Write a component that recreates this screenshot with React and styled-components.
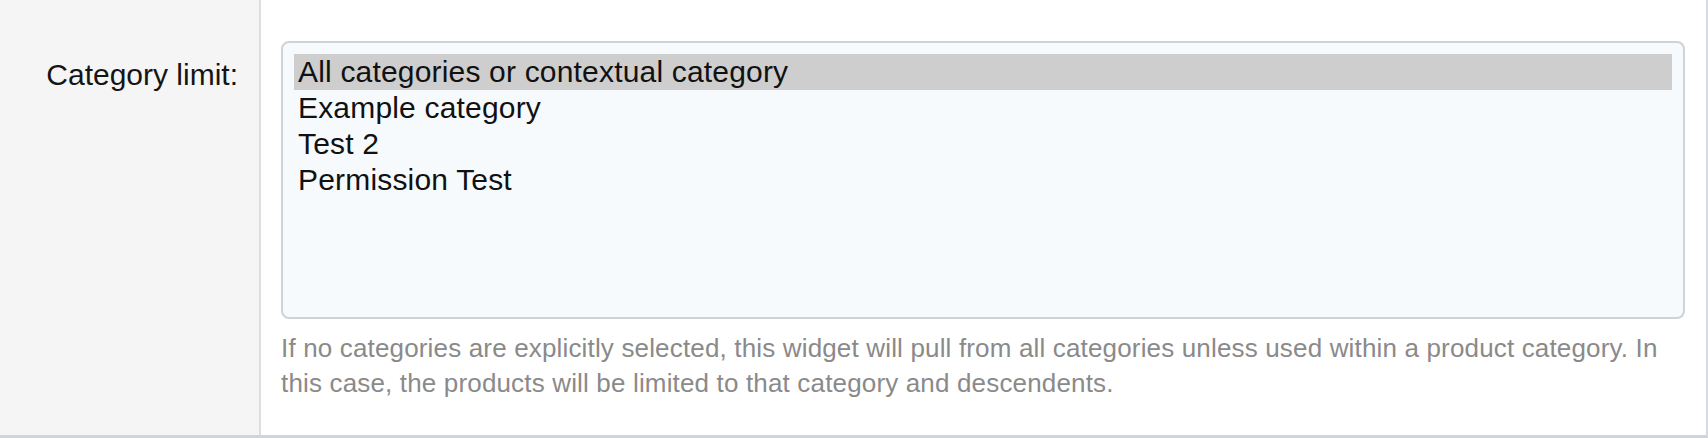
import React from "react";
import styled, { createGlobalStyle } from "styled-components";

const GlobalStyle = createGlobalStyle`
  html, body {
    margin: 0;
    padding: 0;
    background: #ffffff;
  }
  body {
    font-family: "Liberation Sans", Arial, Helvetica, sans-serif;
  }
`;

const options = [
  "All categories or contextual category",
  "Example category",
  "Test 2",
  "Permission Test",
];

const App = () => {
  return (
    <>
      <GlobalStyle />
      <FormTable>
        <LabelCell>
          <Label htmlFor="category-limit">Category limit:</Label>
        </LabelCell>
        <FieldCell>
          <ListBox id="category-limit" role="listbox" aria-multiselectable="true">
            {options.map((opt, i) => (
              <Option key={opt} role="option" aria-selected={i === 0} $selected={i === 0}>
                {opt}
              </Option>
            ))}
          </ListBox>
          <Help>
            If no categories are explicitly selected, this widget will pull from
            all categories unless used within a product category. In this case,
            the products will be limited to that category and descendents.
          </Help>
        </FieldCell>
      </FormTable>
    </>
  );
};

export default App;

const FormTable = styled.div`
  display: grid;
  grid-template-columns: 261px 1fr;
  width: 1708px;
  height: 438px;
  box-sizing: border-box;
  border-right: 2px solid #d6d9df;
  border-bottom: 3px solid #d0d4db;
`;

const LabelCell = styled.div`
  background: #f5f5f5;
  border-right: 2px solid #dedede;
  padding: 57px 21px 0 0;
  text-align: right;
`;

const Label = styled.label`
  font-size: 30px;
  line-height: 36px;
  color: #151515;
`;

const FieldCell = styled.div`
  background: #ffffff;
  padding: 41px 21px 0 20px;
`;

const ListBox = styled.ul`
  list-style: none;
  margin: 0;
  box-sizing: border-box;
  height: 278px;
  padding: 11px;
  border: 2px solid #cfd2d6;
  border-radius: 8px;
  background: #f7fafc;
`;

const Option = styled.li`
  height: 36px;
  padding: 0 4px;
  font-size: 30px;
  line-height: 36px;
  letter-spacing: 0.18px;
  color: #111111;
  white-space: nowrap;
  background: ${(p) => (p.$selected ? "#cecece" : "transparent")};
`;

const Help = styled.p`
  margin: 12px 0 0;
  font-size: 26px;
  line-height: 35px;
  letter-spacing: 0.16px;
  color: #8a8a8a;
`;
